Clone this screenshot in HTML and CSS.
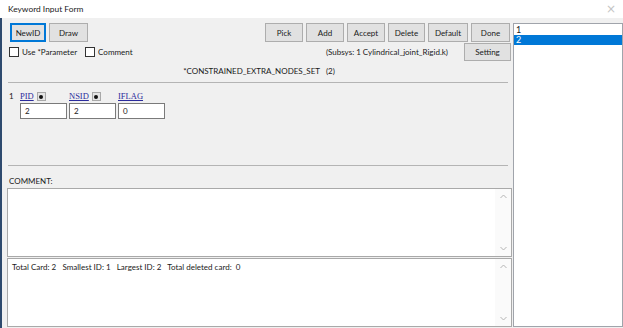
FILE: index.html
```html
<!DOCTYPE html>
<html>
<head>
<meta charset="utf-8">
<link rel="stylesheet" href="styles.css">
</head>
<body>
<div class="window">
  <div class="titlebar">
    <span class="title">Keyword Input Form</span>
    <span class="close">×</span>
  </div>
  <div class="client">
    <div class="form">
      <div class="toolbar">
        <button class="btn btn-default w-newid">NewID</button>
        <button class="btn w-draw">Draw</button>
        <div class="btn-group">
          <button class="btn w-pick">Pick</button>
          <button class="btn w-add">Add</button>
          <button class="btn w-accept">Accept</button>
          <button class="btn w-delete">Delete</button>
          <button class="btn w-default">Default</button>
          <button class="btn w-done">Done</button>
        </div>
      </div>
      <div class="optrow">
        <label class="check"><span class="box"></span>Use *Parameter</label>
        <label class="check"><span class="box"></span>Comment</label>
        <span class="subsys">(Subsys: 1 Cylindrical_joint_Rigid.k)</span>
        <button class="btn w-setting">Setting</button>
      </div>
      <div class="kwtitle">*CONSTRAINED_EXTRA_NODES_SET&nbsp;&nbsp;&nbsp;(2)</div>
      <div class="sep"></div>
      <div class="cards">
        <div class="card">
          <span class="cardno">1</span>
          <div class="field">
            <div class="flabel"><a class="link">PID</a><span class="dotbtn"><i></i></span></div>
            <div class="input">2</div>
          </div>
          <div class="field">
            <div class="flabel"><a class="link">NSID</a><span class="dotbtn"><i></i></span></div>
            <div class="input">2</div>
          </div>
          <div class="field">
            <div class="flabel"><a class="link">IFLAG</a></div>
            <div class="input">0</div>
          </div>
        </div>
      </div>
      <div class="sep"></div>
      <div class="commentlabel">COMMENT:</div>
      <div class="textbox">
        <div class="tb-content"></div>
        <div class="vscroll">
          <svg width="7" height="5" viewBox="0 0 7 5"><polyline points="0.5,4 3.5,1 6.5,4" fill="none" stroke="#b4b4b4" stroke-width="1"/></svg>
          <svg width="7" height="5" viewBox="0 0 7 5"><polyline points="0.5,1 3.5,4 6.5,1" fill="none" stroke="#b4b4b4" stroke-width="1"/></svg>
        </div>
      </div>
      <div class="textbox info">
        <div class="tb-content">Total Card: 2&nbsp;&nbsp;&nbsp;Smallest ID: 1&nbsp;&nbsp;&nbsp;Largest ID: 2&nbsp;&nbsp;&nbsp;Total deleted card:&nbsp;&nbsp;0</div>
        <div class="vscroll">
          <svg width="7" height="5" viewBox="0 0 7 5"><polyline points="0.5,4 3.5,1 6.5,4" fill="none" stroke="#b4b4b4" stroke-width="1"/></svg>
          <svg width="7" height="5" viewBox="0 0 7 5"><polyline points="0.5,1 3.5,4 6.5,1" fill="none" stroke="#b4b4b4" stroke-width="1"/></svg>
        </div>
      </div>
    </div>
    <div class="listbox">
      <div class="item">1</div>
      <div class="item selected">2</div>
    </div>
  </div>
</div>
</body>
</html>
```
FILE: styles.css
```css
* { box-sizing: border-box; }
html, body {
  margin: 0;
  padding: 0;
  width: 623px;
  height: 328px;
  overflow: hidden;
  background: #f0f0f0;
  font-family: Lato, "Liberation Sans", sans-serif;
  font-size: 8px;
  color: #1a1a1a;
}
.window {
  width: 623px;
  height: 328px;
  display: flex;
  flex-direction: column;
}
.titlebar {
  height: 18px;
  background: #fff;
  display: flex;
  align-items: center;
  justify-content: space-between;
  padding: 0 7px 0 8px;
  flex: none;
}
.title { font-size: 8.4px; color: #1a1a1a; }
.close { color: #c4c4c4; font-size: 12px; font-family: "DejaVu Sans", sans-serif; }
.client {
  flex: 1;
  display: flex;
  border-left: 2px solid #2e4a6e;
  padding-top: 5px;
  padding-bottom: 1px;
}
.form {
  width: 506px;
  margin-left: 4px;
  display: flex;
  flex-direction: column;
}
.btn {
  font-family: inherit;
  font-size: 8px;
  color: #1a1a1a;
  background: #e1e1e1;
  border: 1px solid #adadad;
  height: 19px;
  padding: 0;
  margin: 0;
}
.btn-default { border-color: #0078d7; box-shadow: inset 0 0 0 1px #0078d7; }
.toolbar {
  display: flex;
  align-items: center;
  height: 19px;
  padding-left: 4px;
  padding-right: 2px;
  gap: 3px;
}
.btn-group { margin-left: auto; display: flex; gap: 3px; }
.w-newid { width: 36px; }
.w-draw { width: 39px; }
.w-pick { width: 38px; }
.w-add { width: 38px; }
.w-accept { width: 38px; }
.w-delete { width: 37px; }
.w-default { width: 40px; }
.w-done { width: 39px; }
.w-setting { width: 47px; height: 18px; }
.optrow {
  display: flex;
  align-items: center;
  height: 18px;
  margin-top: 1px;
  padding-left: 3px;
  padding-right: 1px;
}
.check { display: flex; align-items: center; margin-right: 8px; }
.box {
  width: 10px;
  height: 10px;
  border: 1px solid #333;
  background: #fff;
  margin-right: 3px;
}
.subsys { margin-left: auto; margin-right: 16px; }
.kwtitle {
  height: 21px;
  line-height: 21px;
  text-align: center;
}
.sep {
  height: 1px;
  background: #b4b4b4;
  margin: 0 4px 0 2px;
}
.cards {
  height: 82px;
  padding: 8px 0 0 3px;
}
.card { display: flex; }
.cardno { width: 11px; line-height: 11px; }
.field { width: 47px; margin-right: 2px; }
.flabel { height: 12px; display: flex; align-items: flex-start; }
.link {
  font-family: "Liberation Serif", serif;
  font-size: 8.5px;
  color: #2b2b9c;
  text-decoration: underline;
  line-height: 11px;
}
.dotbtn {
  width: 9px;
  height: 9px;
  margin-top: 1px;
  border: 1px solid #a8a8a8;
  background: #e4e4e4;
  margin-left: 3px;
  display: flex;
  align-items: center;
  justify-content: center;
}
.dotbtn i { width: 4px; height: 4px; border-radius: 50%; background: #111; display: block; }
.input {
  height: 16px;
  border: 1px solid #7a7a7a;
  background: #fff;
  padding-left: 4px;
  line-height: 14px;
  font-size: 8px;
}
.commentlabel {
  height: 22px;
  line-height: 12px;
  padding-top: 9px;
  padding-left: 3px;
}
.textbox {
  height: 69px;
  margin-left: 1px;
  border: 1px solid #a9a9a9;
  background: #fff;
  display: flex;
}
.textbox.info { margin-top: 1px; }
.tb-content { flex: 1; padding: 3px 4px; }
.vscroll {
  width: 16px;
  background: #fafafa;
  display: flex;
  flex-direction: column;
  justify-content: space-between;
  align-items: center;
  padding: 5px 0 5px;
}
.listbox {
  width: 110px;
  margin-left: 1px;
  border: 1px solid #a0a4ab;
  background: #fff;
  padding-top: 1px;
}
.item { height: 10px; line-height: 10px; padding-left: 2px; font-size: 9px; }
.item.selected { background: #0078d7; color: #fff; }
```
